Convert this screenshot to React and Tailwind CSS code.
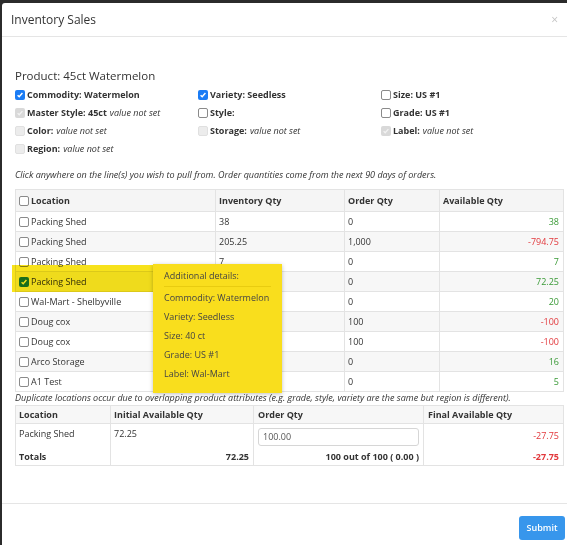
import React from 'react';

const font = { fontFamily: '"Open Sans", "Noto Sans", sans-serif' };

// little checkbox drawn by hand so every state looks the same as the shot
function Box({ state }) {
  if (state === 'checked') {
    return (
      <span className="inline-flex w-[10px] h-[10px] rounded-[2px] bg-[#1a7cf5] items-center justify-center shrink-0">
        <svg width="8" height="8" viewBox="0 0 10 10"><path d="M2 5.2l2 2 4-4.6" stroke="#fff" strokeWidth="1.8" fill="none" /></svg>
      </span>
    );
  }
  if (state === 'disabledChecked') {
    return (
      <span className="inline-flex w-[10px] h-[10px] rounded-[2px] bg-[#d9d9d9] items-center justify-center shrink-0">
        <svg width="8" height="8" viewBox="0 0 10 10"><path d="M2 5.2l2 2 4-4.6" stroke="#f2f2f2" strokeWidth="1.6" fill="none" /></svg>
      </span>
    );
  }
  if (state === 'disabled') {
    return <span className="inline-block w-[10px] h-[10px] rounded-[2px] bg-[#ececec] border border-[#e0e0e0] shrink-0" />;
  }
  return <span className="inline-block w-[10px] h-[10px] rounded-[2px] bg-white border border-[#8a8a8a] shrink-0" />;
}

const attrs = [
  [
    { s: 'checked', label: 'Commodity: Watermelon' },
    { s: 'checked', label: 'Variety: Seedless' },
    { s: 'empty', label: 'Size: US #1' },
  ],
  [
    { s: 'disabledChecked', label: 'Master Style: 45ct', note: 'value not set' },
    { s: 'empty', label: 'Style:' },
    { s: 'empty', label: 'Grade: US #1' },
  ],
  [
    { s: 'disabled', label: 'Color:', note: 'value not set' },
    { s: 'disabled', label: 'Storage:', note: 'value not set' },
    { s: 'disabledChecked', label: 'Label:', note: 'value not set' },
  ],
  [{ s: 'disabled', label: 'Region:', note: 'value not set' }],
];

const rows = [
  { loc: 'Packing Shed', inv: '38', ord: '0', avail: '38', pos: true },
  { loc: 'Packing Shed', inv: '205.25', ord: '1,000', avail: '-794.75', pos: false },
  { loc: 'Packing Shed', inv: '7', ord: '0', avail: '7', pos: true },
  { loc: 'Packing Shed', inv: '72.25', ord: '0', avail: '72.25', pos: true, checked: true },
  { loc: 'Wal-Mart - Shelbyville', inv: '', ord: '0', avail: '20', pos: true },
  { loc: 'Doug cox', inv: '', ord: '100', avail: '-100', pos: false },
  { loc: 'Doug cox', inv: '', ord: '100', avail: '-100', pos: false },
  { loc: 'Arco Storage', inv: '', ord: '0', avail: '16', pos: true },
  { loc: 'A1 Test', inv: '', ord: '0', avail: '5', pos: true },
];

const details = ['Commodity: Watermelon', 'Variety: Seedless', 'Size: 40 ct', 'Grade: US #1', 'Label: Wal-Mart'];

export default function App() {
  return (
    <div className="w-[567px] h-[545px] bg-[#2b2b2b] overflow-hidden text-[#333]" style={font}>
      <div className="ml-[2px] mt-[3px] w-[570px] h-[560px] bg-white rounded-tl-[3px] flex flex-col">
        {/* header */}
        <div className="h-[34px] border-b border-[#e5e5e5] flex items-center justify-between pl-[9px] pr-[8px]">
          <span className="text-[12px] text-[#333] leading-none mt-[1px]">Inventory Sales</span>
          <span className="text-[12px] text-[#c4c4c4] leading-none mr-[6px]">×</span>
        </div>

        {/* body */}
        <div className="pl-[13px] w-[563px] pt-[31px]">
          <div className="text-[11.5px] leading-[16px] text-[#333]">Product: 45ct Watermelon</div>

          <div className="mt-[2px] text-[9px]">
            {attrs.map((line, i) => (
              <div key={i} className="flex h-[18px] items-center">
                {line.map((a, j) => (
                  <div key={j} className="w-[183px] flex items-center gap-[2px]">
                    <Box state={a.s} />
                    <span className="font-bold">{a.label}</span>
                    {a.note && <span className="italic ml-[1px]">{a.note}</span>}
                  </div>
                ))}
              </div>
            ))}
          </div>

          <div className="mt-[11px] text-[9px] italic leading-[12px] text-[#333]">
            Click anywhere on the line(s) you wish to pull from. Order quantities come from the next 90 days of orders.
          </div>

          {/* inventory table */}
          <div className="relative mt-[8px] w-[548px]">
            <table className="w-[548px] border-collapse text-[9px] table-fixed">
              <colgroup>
                <col className="w-[200px]" />
                <col className="w-[129px]" />
                <col className="w-[95px]" />
                <col className="w-[124px]" />
              </colgroup>
              <thead>
                <tr className="h-[22px] bg-[#f5f5f5] font-bold">
                  <th className="border border-[#e3e3e3] px-[3px] text-left">
                    <span className="flex items-center gap-[2px]"><Box state="empty" />Location</span>
                  </th>
                  <th className="border border-[#e3e3e3] px-[3px] text-left">Inventory Qty</th>
                  <th className="border border-[#e3e3e3] px-[3px] text-left">Order Qty</th>
                  <th className="border border-[#e3e3e3] px-[3px] text-left">Available Qty</th>
                </tr>
              </thead>
              <tbody>
                {rows.map((r, i) => (
                  <tr key={i} className={`h-[20px] ${i % 2 === 1 ? 'bg-[#f7f7f7]' : 'bg-white'}`}>
                    <td className="border border-[#e3e3e3] px-[3px]">
                      <span className="flex items-center gap-[2px]"><Box state={r.checked ? 'checked' : 'empty'} />{r.loc}</span>
                    </td>
                    <td className="border border-[#e3e3e3] px-[3px]">{r.inv}</td>
                    <td className="border border-[#e3e3e3] px-[3px]">{r.ord}</td>
                    <td className={`border border-[#e3e3e3] px-[4px] text-right ${r.pos ? 'text-[#3a9a37]' : 'text-[#e2383c]'}`}>{r.avail}</td>
                  </tr>
                ))}
              </tbody>
            </table>

            {/* hover highlight on the selected row */}
            <div className="absolute left-[-3px] top-[76px] w-[143px] h-[27px] bg-[#f7e21c] mix-blend-multiply pointer-events-none" />

            {/* details tooltip */}
            <div className="absolute left-[138px] top-[75px] w-[129px] h-[129px] bg-[#f9de1d] shadow-[0_1px_4px_rgba(0,0,0,0.25)] text-[9px] text-[#444] px-[11px] whitespace-nowrap">
              <div className="h-[23px] pt-[1px] flex items-center border-b border-[#e8cc10]">Additional details:</div>
              <div className="pt-[1px]">
                {details.map((d) => (
                  <div key={d} className="h-[19px] flex items-center">{d}</div>
                ))}
              </div>
            </div>
          </div>

          <div className="text-[9px] italic leading-[12px] text-[#333]">
            Duplicate locations occur due to overlapping product attributes (e.g. grade, style, variety are the same but region is different).
          </div>

          {/* order table */}
          <table className="mt-[1px] w-[548px] border-collapse text-[9px] table-fixed">
            <colgroup>
              <col className="w-[95px]" />
              <col className="w-[143px]" />
              <col className="w-[170px]" />
              <col className="w-[140px]" />
            </colgroup>
            <thead>
              <tr className="h-[18px] bg-[#f7f7f7] font-bold">
                <th className="border border-[#e3e3e3] px-[3px] text-left">Location</th>
                <th className="border border-[#e3e3e3] px-[3px] text-left">Initial Available Qty</th>
                <th className="border border-[#e3e3e3] px-[4px] text-left">Order Qty</th>
                <th className="border border-[#e3e3e3] px-[4px] text-left">Final Available Qty</th>
              </tr>
            </thead>
            <tbody>
              <tr className="h-[24px]">
                <td className="border-l border-[#e3e3e3] px-[3px] align-top pt-[3px]">Packing Shed</td>
                <td className="border-l border-[#e3e3e3] px-[3px] align-top pt-[3px]">72.25</td>
                <td className="border-l border-[#e3e3e3] px-[4px] pt-[2px]">
                  <div className="h-[18px] border border-[#d6d6d6] rounded-[3px] px-[4px] flex items-center text-[#555]">100.00</div>
                </td>
                <td className="border-l border-r border-[#e3e3e3] px-[4px] text-right text-[#e2383c]">-27.75</td>
              </tr>
              <tr className="h-[18px] font-bold">
                <td className="border-l border-b border-[#e3e3e3] px-[3px]">Totals</td>
                <td className="border-l border-b border-[#e3e3e3] px-[4px] text-right">72.25</td>
                <td className="border-l border-b border-[#e3e3e3] px-[4px] text-right">100 out of 100 ( 0.00 )</td>
                <td className="border-l border-r border-b border-[#e3e3e3] px-[4px] text-right text-[#e2383c]">-27.75</td>
              </tr>
            </tbody>
          </table>
        </div>

        {/* footer */}
        <div className="mt-[37px] border-t border-[#e5e5e5] w-[565px] flex justify-end pr-[2px] pt-[12px]">
          <button className="w-[46px] h-[24px] rounded-[3px] bg-[#3796ec] text-white text-[9px] font-semibold">Submit</button>
        </div>
      </div>
    </div>
  );
}
